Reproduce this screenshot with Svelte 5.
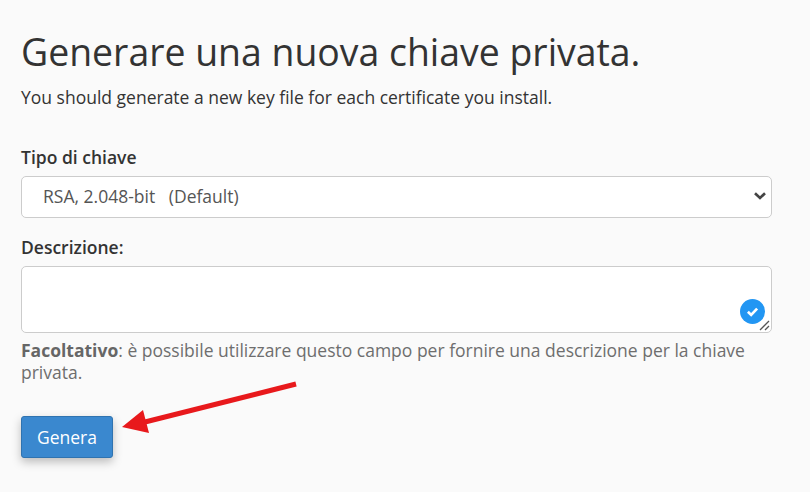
<script>
  const title = 'Generare una nuova chiave privata.';
</script>

<main class="page">
  <h1>{title}</h1>
  <p class="lead">You should generate a new key file for each certificate you install.</p>

  <div class="field first">
    <span class="label">Tipo di chiave</span>
    <div class="select">
      <span>RSA, 2.048-bit &nbsp; (Default)</span>
      <svg class="chev" width="12" height="8" viewBox="0 0 12 8"><path d="M1 1.2 6 6 11 1.2" fill="none" stroke="#444" stroke-width="2.6"/></svg>
    </div>
  </div>

  <div class="field second">
    <span class="label">Descrizione:</span>
    <div class="textarea">
      <span class="check">
        <svg width="25" height="25" viewBox="0 0 26 26"><circle cx="13" cy="13" r="13" fill="#2296f3"/><path d="M8.2 13.3 11.6 16.5 17.8 10" fill="none" stroke="#fff" stroke-width="2.8"/></svg>
      </span>
      <svg class="grip" width="11" height="11" viewBox="0 0 11 11"><path d="M1 10 10 1M6 10 10 6" stroke="#555" stroke-width="1.3" fill="none"/></svg>
    </div>
    <p class="help"><strong>Facoltativo</strong>: è possibile utilizzare questo campo per fornire una descrizione per la chiave privata.</p>
  </div>

  <div class="actions">
    <button type="button">Genera</button>
    <svg class="arrow" width="180" height="60" viewBox="0 0 180 60">
      <path d="M175 4 24 42" stroke="#e8191c" stroke-width="5" fill="none"/>
      <path d="M1 47 22 30 28 53Z" fill="#e8191c"/>
    </svg>
  </div>
</main>

<style>
  :global(body) {
    margin: 0;
    background: #fafafa;
  }
  .page {
    height: 492px;
    box-sizing: border-box;
    padding: 26px 38px 0 21px;
    font-family: "Open Sans", sans-serif;
    font-size: 17.5px;
    color: #333;
    overflow: hidden;
  }
  h1 {
    margin: 0;
    font-size: 37.4px;
    line-height: 52px;
    font-weight: 400;
  }
  .lead {
    margin: 7px 0 0;
    line-height: 24px;
    color: #333;
  }
  .field.first { margin-top: 36px; }
  .field.second { margin-top: 17px; }
  .label {
    display: block;
    font-weight: 600;
    line-height: 24px;
    margin-bottom: 7px;
  }
  .select {
    height: 42px;
    box-sizing: border-box;
    display: flex;
    align-items: center;
    justify-content: space-between;
    padding: 0 5px 2px 21px;
    background: #fff;
    border: 1px solid #ccc;
    border-radius: 5px;
    color: #555;
  }
  .textarea {
    position: relative;
    height: 67px;
    box-sizing: border-box;
    background: #fff;
    border: 1px solid #ccc;
    border-radius: 5px;
  }
  .check {
    position: absolute;
    right: 6px;
    bottom: 8px;
    display: flex;
  }
  .grip {
    position: absolute;
    right: 1px;
    bottom: 1px;
  }
  .help {
    margin: 0;
    padding-top: 6px;
    line-height: 22px;
    color: #6e6e6e;
  }
  .help strong {
    font-weight: 700;
    color: #666;
  }
  .actions {
    position: relative;
    margin-top: 33px;
  }
  button {
    display: block;
    width: 92px;
    height: 42px;
    padding: 0;
    background: #3a88cf;
    border: 1px solid #2f73b0;
    border-radius: 3px;
    color: #fff;
    font: 17.5px "Open Sans", sans-serif;
    box-shadow: 0 4px 10px rgba(0, 0, 0, .25);
  }
  .arrow {
    position: absolute;
    left: 100px;
    top: -36px;
  }
</style>
